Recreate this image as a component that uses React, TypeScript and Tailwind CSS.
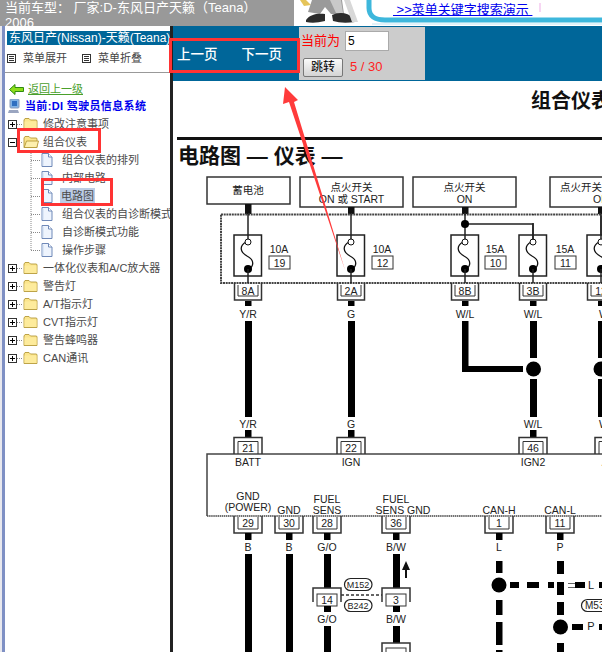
import React from "react";

const Expander = ({ open }: { open?: boolean }) => (
  <svg width="23" height="18" className="shrink-0">
    <line x1="17" y1="9.5" x2="23" y2="9.5" stroke="#888" strokeDasharray="1 1" />
    <rect x="8.5" y="5.5" width="8" height="8" fill="#fff" stroke="#333" />
    <line x1="10" y1="9.5" x2="15" y2="9.5" stroke="#000" />
    {!open && <line x1="12.5" y1="7" x2="12.5" y2="12" stroke="#000" />}
  </svg>
);

const Folder = ({ open }: { open?: boolean }) => (
  <svg width="16" height="14" className="shrink-0" viewBox="0 0 16 14">
    <path d="M1 3 L2 1.5 L6 1.5 L7.5 3 L13.5 3 L14 4 L14 12.5 L1 12.5 Z" fill="#fbe58c" stroke="#b59a3a" strokeWidth="0.9" />
    {open ? (
      <path d="M1.2 12.5 L3.5 6 L15.5 6 L13.8 12.5 Z" fill="#fdf0ae" stroke="#b59a3a" strokeWidth="0.9" />
    ) : (
      <rect x="1.5" y="4.5" width="12" height="7.5" fill="#fdeb9c" />
    )}
  </svg>
);

const Doc = () => (
  <svg width="12" height="14" className="shrink-0" viewBox="0 0 12 14">
    <path d="M1 .5 H7.5 L11 4 V13.5 H1 Z" fill="#eef4fd" stroke="#6f89b8" />
    <path d="M7.5 .5 V4 H11" fill="#fff" stroke="#6f89b8" />
    <path d="M2 2 V12.5" stroke="#c8d8ef" />
  </svg>
);

const Top = ({ label, open }: { label: string; open?: boolean }) => (
  <div className="flex h-[18px] items-center">
    <Expander open={open} />
    <Folder open={open} />
    <span className="ml-[4px] whitespace-nowrap text-[11px] text-[#4a4a4a]">{label}</span>
  </div>
);

const Child = ({ label, last, active }: { label: string; last?: boolean; active?: boolean }) => (
  <div className="flex h-[18px] items-center">
    <svg width="41" height="18" className="shrink-0">
      <line x1="31" y1="0" x2="31" y2={last ? 9.5 : 18} stroke="#888" strokeDasharray="1 1" />
      <line x1="31" y1="9.5" x2="41" y2="9.5" stroke="#888" strokeDasharray="1 1" />
    </svg>
    <Doc />
    <span className={`whitespace-nowrap text-[11px] text-[#4a4a4a] ${active ? "ml-[7px] bg-[#bccde6] px-[1px]" : "ml-[9px]"}`}>{label}</span>
  </div>
);

const MenuIcon = () => (
  <svg width="9" height="9" className="shrink-0">
    <rect x=".5" y=".5" width="8" height="8" fill="#fff" stroke="#333" />
    <path d="M2 2.5H7M2 4.5H7M2 6.5H7" stroke="#333" />
  </svg>
);

const T = ({ x, y, s = 10.5, c, children, w, anchor }: { x: number; y: number; s?: number; c?: string; children: React.ReactNode; w?: number; anchor?: "start" | "middle" }) => (
  <text x={x} y={y} fontSize={s} fill={c ?? "#222"} fontWeight={w} textAnchor={anchor ?? "middle"}>
    {children}
  </text>
);

const Box = ({ x1, x2, y1, y2, a, b }: { x1: number; x2: number; y1: number; y2: number; a?: string; b?: string }) => (
  <g>
    <rect x={x1} y={y1} width={x2 - x1} height={y2 - y1} fill="#fff" stroke="#333" strokeWidth="1.5" />
    {a && <T x={(x1 + x2) / 2} y={y1 + 14}>{a}</T>}
    {b && <T x={(x1 + x2) / 2} y={y1 + 26}>{b}</T>}
  </g>
);

const Fuse = ({ c, amp, no, lx }: { c: number; amp: string; no: string; lx: number }) => (
  <g>
    <line x1={c} y1="214" x2={c} y2="242" stroke="#222" strokeWidth="1.5" />
    <rect x={c - 14} y="235" width="27.5" height="41" fill="#fff" stroke="#222" strokeWidth="1.5" />
    <line x1={c} y1="235" x2={c} y2="240" stroke="#222" strokeWidth="1.5" />
    <path d={`M${c - 2} 242 C${c - 9} 246 ${c - 8} 252 ${c - 1} 256 C${c + 7} 260 ${c + 6} 267 ${c} 269`} fill="none" stroke="#111" strokeWidth="1.3" />
    <circle cx={c} cy="242" r="3" fill="#fff" stroke="#111" />
    <circle cx={c} cy="269" r="4" fill="#000" />
    <line x1={c} y1="269" x2={c} y2="283" stroke="#222" strokeWidth="1.5" />
    <T x={lx} y="253">{amp}</T>
    <rect x={lx - 10} y="256" width="21" height="13" fill="#fff" stroke="#333" />
    <T x={lx + 0.5} y="267">{no}</T>
  </g>
);

const ConnDown = ({ c, label, y = 283 }: { c: number; label: string; y?: number }) => (
  <g>
    <path d={`M${c - 13.5} ${y} V${y + 17} H${c + 13.5} V${y}`} fill="none" stroke="#333" strokeWidth="1.5" />
    <path d={`M${c - 10} ${y + 2} V${y + 13} H${c + 10} V${y + 2}`} fill="none" stroke="#333" />
    <T x={c} y={y + 12}>{label}</T>
    <rect x={c - 3} y={y + 18} width="6.5" height="5" fill="#000" />
  </g>
);

const ConnUp = ({ c, label, sub }: { c: number; label: string; sub: string }) => (
  <g>
    <rect x={c - 3} y="430" width="6.5" height="7" fill="#000" />
    <path d={`M${c - 14} 454 V437.5 H${c + 14} V454`} fill="none" stroke="#333" strokeWidth="1.5" />
    <path d={`M${c - 10} 454 V441.5 H${c + 10} V454`} fill="none" stroke="#333" />
    <T x={c} y="452">{label}</T>
    <T x={c} y="466">{sub}</T>
  </g>
);

const Col = ({ c, a }: { c: number; a: string }) => (
  <g>
    <T x={c} y="318">{a}</T>
    <T x={c} y="428">{a}</T>
  </g>
);

const Low = ({ c, label, wire }: { c: number; label: string; wire: string }) => (
  <g>
    <path d={`M${c - 14} 516 V533 H${c + 14} V516`} fill="none" stroke="#333" strokeWidth="1.5" />
    <path d={`M${c - 10} 517 V529 H${c + 10} V517`} fill="none" stroke="#333" />
    <T x={c} y="527">{label}</T>
    <rect x={c - 3} y="533" width="6.5" height="7" fill="#000" />
    <T x={c} y="551">{wire}</T>
  </g>
);

const Diagram = () => (
  <svg viewBox="173 81 429 571" className="block h-[571px] w-[429px]" style={{ fontFamily: "'Liberation Sans','Noto Sans CJK SC',sans-serif" }}>
    <rect x="173" y="81" width="429" height="571" fill="#fff" />
    <T x="531" y="108" s={20} w={700} c="#111" anchor="start">组合仪表</T>
    <rect x="177" y="137" width="425" height="3" fill="#111" />
    <T x="178" y="163" s={21} w={700} c="#111" anchor="start">电路图 — 仪表 —</T>

    <Box x1={207} x2={290} y1={177} y2={204} />
    <T x="248" y="194">蓄电池</T>
    <Box x1={300} x2={403} y1={177} y2={207} a="点火开关" b="ON 或 START" />
    <Box x1={413} x2={516} y1={177} y2={207} a="点火开关" b="ON" />
    <Box x1={550} x2={660} y1={177} y2={207} />
    <T x="581" y="191">点火开关</T>
    <T x="593" y="203" anchor="start">ON</T>
    {[245, 348, 462, 598].map((x) => (
      <rect key={x} x={x} y={x === 245 ? 204 : 207} width="6.5" height={x === 245 ? 10 : 7} fill="#111" />
    ))}
    <rect x="221" y="214.5" width="420" height="68.5" fill="none" stroke="#444" strokeWidth="2" strokeDasharray="2 .7" />

    <Fuse c={248} amp="10A" no="19" lx={279} />
    <Fuse c={351} amp="10A" no="12" lx={382} />
    <Fuse c={465} amp="15A" no="10" lx={495} />
    <Fuse c={533} amp="15A" no="11" lx={565} />
    <Fuse c={601} amp="" no="" lx={680} />
    <path d="M465 224 H533 V240" fill="none" stroke="#222" strokeWidth="1.5" />
    <line x1="533" y1="215.5" x2="533" y2="223" stroke="#fff" strokeWidth="3" />
    <line x1="601" y1="215.5" x2="601" y2="235" stroke="#222" strokeWidth="1.5" />
    <circle cx="465" cy="224" r="4" fill="#000" />

    <ConnDown c={248} label="8A" />
    <ConnDown c={351} label="2A" />
    <ConnDown c={465} label="8B" />
    <ConnDown c={533} label="3B" />
    <ConnDown c={601} label="12" />

    <Col c={248} a="Y/R" />
    <Col c={351} a="G" />
    <T x="465" y="318">W/L</T>
    <Col c={533} a="W/L" />
    <Col c={604} a="W" />

    <rect x="245" y="321" width="7" height="96" fill="#000" />
    <rect x="348" y="321" width="7" height="96" fill="#000" />
    <path d="M462 321 H468.5 V366 H523 V372 H462 Z" fill="#000" />
    <rect x="530" y="321" width="7" height="37" fill="#000" />
    <rect x="530" y="379" width="7" height="38" fill="#000" />
    <circle cx="533.5" cy="369" r="7.5" fill="#000" />
    <rect x="598" y="321" width="7" height="37" fill="#000" />
    <rect x="598" y="379" width="7" height="38" fill="#000" />
    <circle cx="601" cy="369" r="7.5" fill="#000" />

    <path d="M207 516 V454 H602" fill="none" stroke="#444" strokeWidth="1.5" />
    <line x1="207" y1="516" x2="602" y2="516" stroke="#444" strokeWidth="1.5" strokeDasharray="1.5 .6" />

    <ConnUp c={248} label="21" sub="BATT" />
    <ConnUp c={351} label="22" sub="IGN" />
    <ConnUp c={533} label="46" sub="IGN2" />
    <ConnUp c={609} label="3" sub="AC" />

    <T x="248" y="500">GND</T>
    <T x="248" y="511">(POWER)</T>
    <T x="289" y="514">GND</T>
    <T x="327" y="503">FUEL</T>
    <T x="327" y="514">SENS</T>
    <T x="396" y="503">FUEL</T>
    <T x="403" y="514">SENS GND</T>
    <T x="499" y="514">CAN-H</T>
    <T x="560" y="514">CAN-L</T>

    <Low c={248} label="29" wire="B" />
    <Low c={289} label="30" wire="B" />
    <Low c={327} label="28" wire="G/O" />
    <Low c={396} label="36" wire="B/W" />
    <Low c={499} label="1" wire="L" />
    <Low c={560} label="11" wire="P" />

    <rect x="245" y="554" width="7" height="98" fill="#000" />
    <rect x="286" y="554" width="7" height="98" fill="#000" />
    <rect x="324" y="554" width="7" height="34" fill="#000" />
    <rect x="393" y="554" width="7" height="34" fill="#000" />

    <path d="M313 602 V588 H341 V602" fill="none" stroke="#333" strokeWidth="1.5" />
    <rect x="317" y="594" width="20" height="12" fill="#fff" stroke="#333" />
    <T x="327" y="604">14</T>
    <rect x="324" y="606" width="7" height="6" fill="#000" />
    <T x="327" y="623">G/O</T>
    <rect x="324" y="626" width="7" height="26" fill="#000" />

    <line x1="341" y1="595" x2="382" y2="595" stroke="#333" strokeDasharray="3 2" strokeWidth="1.3" />
    <rect x="344.5" y="578.5" width="27.5" height="12" rx="6" fill="#fff" stroke="#222" strokeWidth="1.2" />
    <T x="358" y="588" s={9}>M152</T>
    <rect x="344.5" y="599.5" width="27.5" height="12" rx="6" fill="#fff" stroke="#222" strokeWidth="1.2" />
    <T x="358" y="609" s={9}>B242</T>

    <path d="M382 602 V588 H410 V602" fill="none" stroke="#333" strokeWidth="1.5" />
    <rect x="386" y="594" width="20" height="12" fill="#fff" stroke="#333" />
    <T x="396" y="604">3</T>
    <rect x="393" y="606" width="7" height="6" fill="#000" />
    <T x="396" y="623">B/W</T>
    <rect x="393" y="626" width="7" height="17" fill="#000" />
    <path d="M382 652 V643 H410 V652" fill="none" stroke="#333" strokeWidth="1.5" />
    <rect x="386" y="648" width="20" height="10" fill="#fff" stroke="#333" />
    <path d="M406 561 L410 570 H407 V578 H405 V570 H402 Z" fill="#111" />

    <rect x="496" y="561" width="6.5" height="12" fill="#000" />
    <circle cx="499" cy="585" r="7.5" fill="#000" />
    <rect x="496" y="600" width="6.5" height="15" fill="#000" />
    <rect x="496" y="622" width="6.5" height="23" fill="#000" />
    <rect x="496" y="650" width="6.5" height="2" fill="#000" />
    <rect x="510" y="582" width="9" height="6" fill="#000" />
    <rect x="527" y="582" width="12" height="6" fill="#000" />
    <rect x="548" y="582" width="6" height="6" fill="#000" />
    <rect x="575" y="582" width="10" height="6" fill="#000" />
    <rect x="568" y="583" width="7" height="1" fill="#666" />
    <rect x="568" y="587" width="7" height="1" fill="#666" />
    <T x="591" y="589" s={11}>L</T>
    <rect x="599" y="582" width="3" height="6" fill="#000" />

    <rect x="557" y="561" width="7" height="13" fill="#000" />
    <rect x="557" y="582" width="7" height="13" fill="#000" />
    <rect x="557" y="602" width="7" height="13" fill="#000" />
    <circle cx="560.5" cy="627" r="7.5" fill="#000" />
    <rect x="557" y="643" width="7" height="9" fill="#000" />
    <rect x="572" y="624" width="11" height="6" fill="#000" />
    <T x="591" y="630" s={11}>P</T>
    <rect x="599" y="624" width="3" height="6" fill="#000" />
    <rect x="581.5" y="599.5" width="40" height="12" rx="6" fill="#fff" stroke="#222" strokeWidth="1.2" />
    <T x="585" y="609" s={10} anchor="start">M53</T>
  </svg>
);

export default function App() {
  return (
    <div className="relative flex h-[652px] w-[602px] flex-col overflow-hidden bg-white text-[#222] [font-family:'Liberation_Sans','Noto_Sans_CJK_SC',sans-serif]">
      {/* top strip */}
      <div className="flex h-[26px] shrink-0">
        <div className="w-[294px] overflow-hidden bg-[#999] pl-[5px] pr-[30px] text-[13px] leading-[15px] text-white">
          当前车型： 厂家:D-东风日产天籁（Teana） 2006
        </div>
        <div className="relative flex-1 bg-white">
          <svg width="308" height="26" viewBox="294 0 308 26" className="block">
            <path d="M300 0 H306 L311 5 L304 6 Z" fill="#e5c45a" />
            <path d="M312 0 H342 L344 14 L331 14 L325 7 L320 14 L308 12 Z" fill="#9a9a9a" />
            <path d="M330 0 H341 L343 13 H336 Z" fill="#c9c9c9" />
            <path d="M306 20 C310 14 318 13 325 14 L325 21 Q314 24 306 22 Z" fill="#2c2c2c" />
            <path d="M332 15 C338 12 348 12 353 18 L355 22 Q342 24 333 21 Z" fill="#2c2c2c" />
            <path d="M344 0 H350 L358 22 L352 22 Z" fill="#d8d8d8" />
            <path d="M369 0 V8 C369 16 375 20 385 20 H602" fill="none" stroke="#3db7dc" strokeWidth="5" />
            <path d="M372 24 H602" fill="none" stroke="#d7eef7" strokeWidth="1.5" />
            <rect x="539" y="3" width="2" height="9" fill="#f7d6f3" />
          </svg>
          <a href="#" className="absolute left-[99px] top-[2px] whitespace-nowrap text-[13px] leading-[16px] text-[#0000ee] underline">
            &nbsp;&gt;&gt;菜单关键字搜索演示&nbsp;
          </a>
        </div>
      </div>

      <div className="flex min-h-0 flex-1">
        {/* sidebar */}
        <aside className="flex w-[170px] shrink-0">
          <div className="w-[2px] shrink-0 bg-[#e8e8ee]" />
          <div className="w-[3px] shrink-0 bg-[#7f90c4]" />
          <div className="min-w-0 flex-1 overflow-hidden">
            <div className="ml-[2px] mt-[5px] h-[14px] overflow-hidden whitespace-nowrap bg-[#006699] pl-[2px] text-[12px] leading-[14px] text-white">
              东风日产(Nissan)-天籁(Teana)
            </div>
            <div className="flex h-[28px] items-center border-b-[1px] border-[#999] pl-[2px] text-[11px] text-[#444]">
              <MenuIcon />
              <span className="ml-[7px] whitespace-nowrap">菜单展开</span>
              <span className="w-[15px]" />
              <MenuIcon />
              <span className="ml-[7px] whitespace-nowrap">菜单折叠</span>
            </div>
            <div className="-ml-[5px]">
              <div className="mt-[8px] flex h-[16px] items-center pl-[9px]">
                <svg width="15" height="11" viewBox="0 0 15 11" className="shrink-0">
                  <path d="M.5 5.5 L6 .5 V3.5 H14.5 V7.5 H6 V10.5 Z" fill="#8ede1a" stroke="#2f8a10" />
                </svg>
                <a href="#" className="ml-[4px] whitespace-nowrap text-[11px] text-[#4aa02c] underline">返回上一级</a>
              </div>
              <div className="flex h-[18px] items-center pl-[8px]">
                <svg width="12" height="15" viewBox="0 0 12 15" className="shrink-0">
                  <rect x="2" y="0" width="9" height="9" rx="1" fill="#7fb2e6" stroke="#8a9ab8" />
                  <rect x="4" y="2" width="5" height="5" fill="#2f6fc0" />
                  <path d="M1 11 H10 L11 14 H0 Z" fill="#9aa5c0" />
                </svg>
                <span className="ml-[5px] whitespace-nowrap text-[11px] font-bold tracking-[0.35px] text-[#0000ee]">当前:DI 驾驶员信息系统</span>
              </div>
              <div>
                <Top label="修改注意事项" />
                <Top label="组合仪表" open />
                <Child label="组合仪表的排列" />
                <Child label="内部电路" />
                <Child label="电路图" active />
                <Child label="组合仪表的自诊断模式" />
                <Child label="自诊断模式功能" />
                <Child label="操作步骤" last />
                <Top label="一体化仪表和A/C放大器" />
                <Top label="警告灯" />
                <Top label="A/T指示灯" />
                <Top label="CVT指示灯" />
                <Top label="警告蜂鸣器" />
                <Top label="CAN通讯" />
              </div>
            </div>
          </div>
        </aside>
        <div className="w-[3px] shrink-0 bg-[#222]" />

        {/* content */}
        <main className="flex min-w-0 flex-1 flex-col">
          <div className="flex h-[55px] shrink-0 bg-[#006699]">
            <div className="flex w-[126px] shrink-0 items-center pl-[4px] pt-[3px] text-[13.5px] font-medium text-white">
              <span>上一页</span>
              <span className="ml-[24px]">下一页</span>
            </div>
            <div className="mt-[1px] h-[53px] w-[126px] bg-[#cccccc] pl-[2px] pt-[4px]">
              <div className="flex h-[20px] items-center">
                <span className="w-[44px] text-[13px] text-[#ff0000]">当前为</span>
                <input defaultValue="5" className="h-[20px] w-[44px] border border-[#aaa] bg-white pl-[2px] text-[12px] text-black" />
              </div>
              <div className="mt-[7px] flex h-[18px] items-center">
                <button className="ml-[2px] h-[19px] w-[40px] rounded-[2px] border border-[#777] bg-gradient-to-b from-[#fafafa] to-[#d4d4d4] text-[12px] leading-none text-black">跳转</button>
                <span className="ml-[7px] text-[13px] text-[#ff2222]">5 / 30</span>
              </div>
            </div>
          </div>
          <Diagram />
        </main>
      </div>

      {/* red annotations over the page */}
      <div className="absolute left-[169px] top-[38px] h-[35px] w-[131px] border-[3px] border-[#f33]" />
      <div className="absolute left-[17px] top-[128px] h-[25px] w-[84px] border-[3px] border-[#f33]" />
      <div className="absolute left-[41px] top-[178px] h-[28px] w-[72px] border-[3px] border-[#f33]" />
      <svg width="602" height="652" className="pointer-events-none absolute left-0 top-0">
        <polygon points="285,87 298,100 294,102 345,270 289,102 283,104" fill="#ff3b3b" />
      </svg>
    </div>
  );
}
